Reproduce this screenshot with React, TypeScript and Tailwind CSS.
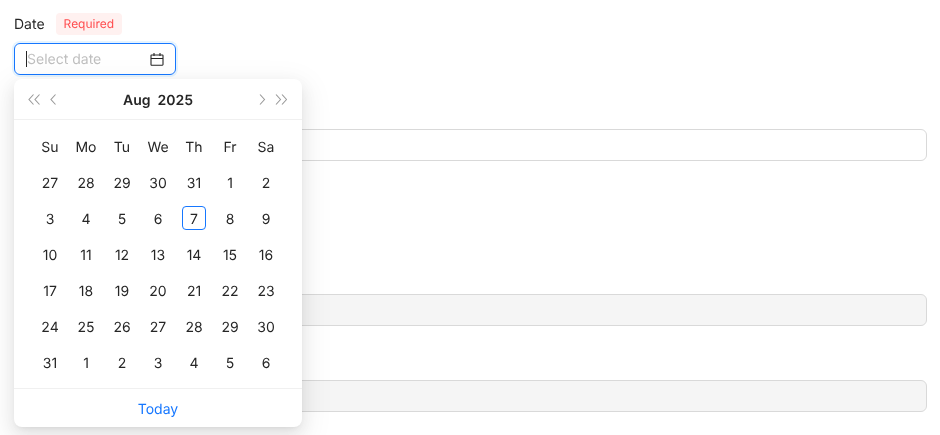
import React from "react";

const weeks = [
  [27, 28, 29, 30, 31, 1, 2],
  [3, 4, 5, 6, 7, 8, 9],
  [10, 11, 12, 13, 14, 15, 16],
  [17, 18, 19, 20, 21, 22, 23],
  [24, 25, 26, 27, 28, 29, 30],
  [31, 1, 2, 3, 4, 5, 6],
];
const days = ["Su", "Mo", "Tu", "We", "Th", "Fr", "Sa"];

function Chevron({ dir, double }: { dir: "l" | "r"; double?: boolean }) {
  const single = dir === "l" ? "M5.5 0.5 L1 5.5 L5.5 10.5" : "M1 0.5 L5.5 5.5 L1 10.5";
  const second = dir === "l" ? "M11.5 0.5 L7 5.5 L11.5 10.5" : "M7 0.5 L11.5 5.5 L7 10.5";
  return (
    <svg width={double ? 12 : 7} height="11" viewBox={double ? "0 0 12 11" : "0 0 7 11"} fill="none" stroke="#999999" strokeWidth="1.1">
      <path d={single} />
      {double && <path d={second} />}
    </svg>
  );
}

function CalendarIcon() {
  return (
    <svg width="14" height="14" viewBox="0 0 14 14" fill="none" stroke="#262626" strokeWidth="1.1">
      <rect x="1" y="3" width="12" height="10.2" rx="0.6" />
      <path d="M1 6.5 H13 M4 1 V4 M10 1 V4" />
    </svg>
  );
}

function Label({ children }: { children?: React.ReactNode }) {
  return <div className="h-[22px] mb-2 flex items-center">{children}</div>;
}

export default function App() {
  return (
    <div className="relative w-[940px] h-[435px] overflow-hidden bg-white px-[14px] pt-[13px] text-[14px] text-[#262626] font-['Inter',sans-serif] [text-rendering:geometricPrecision] will-change-transform">
      <Label>
        <span>Date</span>
        <span className="ml-[11px] h-[22px] px-2 rounded-[4px] bg-[#fff1f0] text-[#ff4d4f] text-[12px] leading-[22px]">Required</span>
      </Label>
      <div className="w-[162px] h-[32px] rounded-[6px] border border-[#1677ff] shadow-[0_0_0_2px_rgba(5,145,255,0.1)] flex items-center pl-[11px] pr-[11px] mb-6">
        <span className="w-px h-[16px] bg-[#262626]" />
        <span className="flex-1 text-[#bfbfbf] leading-[20px] pt-[2px]">Select date</span>
        <CalendarIcon />
      </div>

      <Label />
      <div className="h-[32px] w-[913px] rounded-[6px] border border-[#d9d9d9] bg-white mb-[133px]" />

      <div className="h-[32px] w-[913px] rounded-[6px] border border-[#d9d9d9] bg-[#f5f5f5] mb-6" />

      <Label />
      <div className="h-[32px] w-[913px] rounded-[6px] border border-[#d9d9d9] bg-[#f5f5f5]" />

      <div className="absolute left-[14px] top-[79px] w-[288px] h-[348px] rounded-[8px] bg-white shadow-[0_6px_16px_0_rgba(0,0,0,0.08),0_3px_6px_-4px_rgba(0,0,0,0.12),0_9px_28px_8px_rgba(0,0,0,0.05)] flex flex-col">
        <div className="h-[41px] border-b border-[#f0f0f0] flex items-center pl-[14px] pr-[15px] shrink-0">
          <Chevron dir="l" double />
          <span className="ml-[10px] flex"><Chevron dir="l" /></span>
          <div className="flex-1 text-center font-semibold whitespace-pre pt-[3px]">Aug  2025</div>
          <span className="mr-[9px] flex"><Chevron dir="r" /></span>
          <Chevron dir="r" double />
        </div>
        <div className="grid grid-cols-[repeat(7,36px)] auto-rows-[36px] justify-center pt-[8px] pb-[8px] flex-1">
          {days.map((d) => (
            <div key={d} className="flex items-center justify-center pt-[2px]">{d}</div>
          ))}
          {weeks.flatMap((w, i) =>
            w.map((n, j) => (
              <div key={`${i}-${j}`} className="flex items-center justify-center">
                <span className={"w-[24px] h-[24px] pt-[2px] flex items-center justify-center rounded-[4px] " + (i === 1 && j === 4 ? "border border-[#1677ff]" : "")}>{n}</span>
              </div>
            ))
          )}
        </div>
        <div className="h-[39px] pt-[2px] border-t border-[#f0f0f0] flex items-center justify-center text-[#1677ff] shrink-0">Today</div>
      </div>
    </div>
  );
}
